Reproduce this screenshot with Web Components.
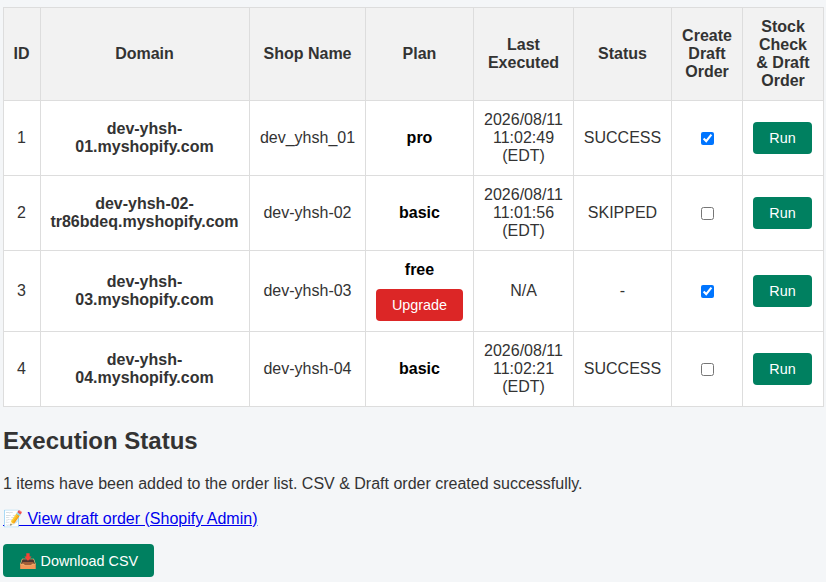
<!DOCTYPE html>
<html lang="en">
<head>
<meta charset="utf-8">
<title>Shops</title>
<style>
  html, body { margin: 0; background: #f4f6f8; }
  body { padding: 7px 3px 0; font-family: "Liberation Sans", Arial, sans-serif; font-size: 16px; color: #333; }
</style>
</head>
<body>
<shop-table></shop-table>
<execution-status>
  1 items have been added to the order list. CSV &amp; Draft order created successfully.
</execution-status>

<script>
// Simple button, colour comes from the variant attribute
class ActionButton extends HTMLElement {
  constructor() {
    super();
    this.attachShadow({ mode: 'open' });
    this.shadowRoot.innerHTML = `
      <style>
        :host { display: inline-block; }
        button {
          display: block;
          background: #008060;
          color: #fff;
          border: none;
          border-radius: 4px;
          padding: 8px 16px;
          height: 32px;
          font: 14.4px/16px "Liberation Sans", Arial, sans-serif;
          cursor: pointer;
        }
        :host([variant="danger"]) button { background: #dc2626; }
        :host([size="large"]) button { height: 33px; padding: 8px 15.5px; }
      </style>
      <button><slot></slot></button>
    `;
  }
}
customElements.define('action-button', ActionButton);

const SHOPS = [
  { id: 1, domain: 'dev-yhsh-01.myshopify.com', shop: 'dev_yhsh_01', plan: 'pro', last: '2026/08/11 11:02:49 (EDT)', status: 'SUCCESS', draft: true },
  { id: 2, domain: 'dev-yhsh-02-tr86bdeq.myshopify.com', shop: 'dev-yhsh-02', plan: 'basic', last: '2026/08/11 11:01:56 (EDT)', status: 'SKIPPED', draft: false },
  { id: 3, domain: 'dev-yhsh-03.myshopify.com', shop: 'dev-yhsh-03', plan: 'free', last: 'N/A', status: '-', draft: true },
  { id: 4, domain: 'dev-yhsh-04.myshopify.com', shop: 'dev-yhsh-04', plan: 'basic', last: '2026/08/11 11:02:21 (EDT)', status: 'SUCCESS', draft: false },
];

class ShopTable extends HTMLElement {
  constructor() {
    super();
    this.attachShadow({ mode: 'open' });
  }

  connectedCallback() {
    const rows = SHOPS.map((s) => `
      <tr>
        <td class="tight">${s.id}</td>
        <td class="domain tight">${s.domain}</td>
        <td>${s.shop}</td>
        <td class="plan">
          <b>${s.plan}</b>
          ${s.plan === 'free' ? '<action-button variant="danger">Upgrade</action-button>' : ''}
        </td>
        <td>${s.last}</td>
        <td>${s.status}</td>
        <td><input type="checkbox" ${s.draft ? 'checked' : ''}></td>
        <td class="tight"><action-button>Run</action-button></td>
      </tr>`).join('');

    this.shadowRoot.innerHTML = `
      <style>
        :host { display: block; }
        table {
          width: 820px;
          table-layout: fixed;
          border-collapse: collapse;
          background: #fff;
        }
        th, td {
          border: 1px solid #ddd;
          text-align: center;
          vertical-align: middle;
          line-height: 18px;
          padding: 10px 8px;
        }
        th { background: #f2f2f2; font-weight: bold; height: 72px; }
        td { height: 54px; }
        .tight { padding-right: 9px; }
        td.domain { font-weight: bold; }
        td.plan b { display: block; color: #000; }
        td.plan action-button { margin-top: 10px; }
        td action-button { vertical-align: middle; }
        input { margin: 0; width: 13px; height: 13px; vertical-align: middle; accent-color: #0075ff; }
      </style>
      <table>
        <colgroup>
          <col style="width:37px"><col style="width:209px"><col style="width:116px"><col style="width:108px">
          <col style="width:100px"><col style="width:98px"><col style="width:71px"><col style="width:81px">
        </colgroup>
        <thead>
          <tr>
            <th class="tight">ID</th><th class="tight">Domain</th><th>Shop Name</th><th>Plan</th><th>Last Executed</th>
            <th>Status</th><th>Create Draft Order</th><th>Stock Check &amp; Draft Order</th>
          </tr>
        </thead>
        <tbody>${rows}</tbody>
      </table>
    `;
  }
}
customElements.define('shop-table', ShopTable);

class ExecutionStatus extends HTMLElement {
  constructor() {
    super();
    this.attachShadow({ mode: 'open' });
    this.shadowRoot.innerHTML = `
      <style>
        :host { display: block; }
        h2 { margin: 20px 0 0; font-size: 24px; line-height: 28px; color: #333; }
        p { margin: 20px 0 0; line-height: 18px; }
        a { color: #0000ee; }
        .link { margin-top: 17px; }
        .download { margin-top: 16px; }
      </style>
      <h2>Execution Status</h2>
      <p><slot></slot></p>
      <p class="link"><a href="#">📝 View draft order (Shopify Admin)</a></p>
      <div class="download"><action-button size="large">📥 Download CSV</action-button></div>
    `;
  }
}
customElements.define('execution-status', ExecutionStatus);
</script>
</body>
</html>
